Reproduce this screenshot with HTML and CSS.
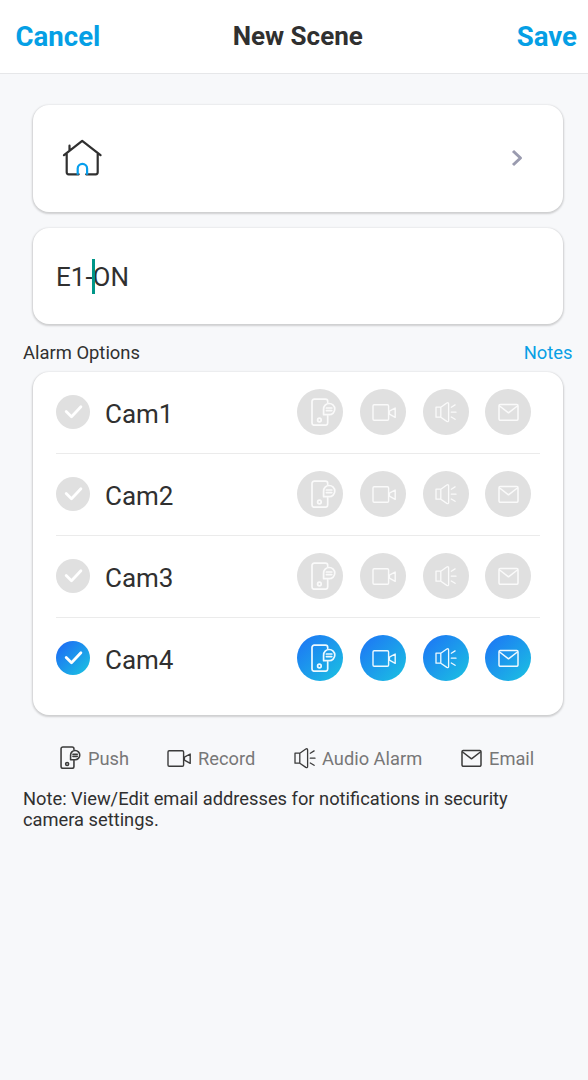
FILE: index.html
```html
<!DOCTYPE html>
<html lang="en">
<head>
<meta charset="utf-8">
<title>New Scene</title>
<link rel="stylesheet" href="styles.css">
</head>
<body>
<svg class="sprite" aria-hidden="true">
  <symbol id="push" viewBox="0 0 25 28">
    <path d="M16.7 4.2V3.4a2.2 2.2 0 0 0-2.2-2.2H3.2A2.2 2.2 0 0 0 1 3.4V25a2.2 2.2 0 0 0 2.2 2.2h11.3a2.2 2.2 0 0 0 2.2-2.2v-7.2"/>
    <circle cx="8.4" cy="22" r="1.8"/>
    <path d="M12.6 16.7V11.2a5.6 5.6 0 1 1 5.6 5.5zM15.4 10h5.4M15.4 12.6h5.4"/>
  </symbol>
  <symbol id="record" viewBox="0 0 25 19">
    <rect x="1" y="1.7" width="15.6" height="15.6" rx="1.2"/>
    <path d="M17.4 8.2l5.8-3.2v9.4l-5.8-3.2z"/>
  </symbol>
  <symbol id="audio" viewBox="0 0 22 22">
    <path d="M1 6.2h4.8v10H1zM5.8 6.2l6-4.2q1.8-.8 1.8 1v16.4q0 1.8-1.8 1l-6-4.2M16.3 6.2l3.8-2.3M16.3 11.2h4.7M16.3 16l3.8 2.3"/>
  </symbol>
  <symbol id="email" viewBox="0 0 21 18">
    <rect x="1" y="1.5" width="19" height="15.8" rx="1.2"/>
    <path d="M1.6 3l8.9 6.8L19.4 3"/>
  </symbol>
  <symbol id="check" viewBox="0 0 34 34">
    <path d="M10.2 16.5l5.3 5.3 9.4-10"/>
  </symbol>
</svg>

<header class="topbar">
  <a class="action">Cancel</a>
  <h1 class="title">New Scene</h1>
  <a class="action save">Save</a>
</header>

<main class="content">
  <section class="card icon-card">
    <svg class="house" viewBox="0 0 40 40">
      <path d="M2 17.2L20.2 2.8 38.5 17.2M7.5 12V7.7M4.700 16v18.300q0 2 2 2h10M24.200 36.300h9.500q2 0 2-2V16"/>
      <path class="door" d="M15.700 36.800v-6.300a4.700 4.700 0 0 1 9.400 0v6.300"/>
    </svg>
    <svg class="chevron" viewBox="0 0 12 18"><path d="M2 2l7.500 7L2 16"/></svg>
  </section>

  <section class="card name-card"><span>E1-</span><span class="caret"></span><span>ON</span></section>

  <div class="section-head"><span class="label">Alarm Options</span><a class="notes">Notes</a></div>

  <section class="card cams">
    <div class="row">
      <svg class="tick"><use href="#check"/></svg><span class="cam">Cam1</span>
      <div class="options">
        <span class="dot"><svg class="push"><use href="#push"/></svg></span>
        <span class="dot"><svg class="record"><use href="#record"/></svg></span>
        <span class="dot"><svg class="audio"><use href="#audio"/></svg></span>
        <span class="dot"><svg class="email"><use href="#email"/></svg></span>
      </div>
    </div>
    <div class="row">
      <svg class="tick"><use href="#check"/></svg><span class="cam">Cam2</span>
      <div class="options">
        <span class="dot"><svg class="push"><use href="#push"/></svg></span>
        <span class="dot"><svg class="record"><use href="#record"/></svg></span>
        <span class="dot"><svg class="audio"><use href="#audio"/></svg></span>
        <span class="dot"><svg class="email"><use href="#email"/></svg></span>
      </div>
    </div>
    <div class="row">
      <svg class="tick"><use href="#check"/></svg><span class="cam">Cam3</span>
      <div class="options">
        <span class="dot"><svg class="push"><use href="#push"/></svg></span>
        <span class="dot"><svg class="record"><use href="#record"/></svg></span>
        <span class="dot"><svg class="audio"><use href="#audio"/></svg></span>
        <span class="dot"><svg class="email"><use href="#email"/></svg></span>
      </div>
    </div>
    <div class="row active">
      <svg class="tick"><use href="#check"/></svg><span class="cam">Cam4</span>
      <div class="options">
        <span class="dot"><svg class="push"><use href="#push"/></svg></span>
        <span class="dot"><svg class="record"><use href="#record"/></svg></span>
        <span class="dot"><svg class="audio"><use href="#audio"/></svg></span>
        <span class="dot"><svg class="email"><use href="#email"/></svg></span>
      </div>
    </div>
  </section>

  <div class="legend">
    <div class="item item-push"><svg class="push"><use href="#push"/></svg><span>Push</span></div>
    <div class="item item-record"><svg class="record"><use href="#record"/></svg><span>Record</span></div>
    <div class="item item-audio"><svg class="audio"><use href="#audio"/></svg><span>Audio Alarm</span></div>
    <div class="item item-email"><svg class="email"><use href="#email"/></svg><span>Email</span></div>
  </div>

  <p class="note">Note: View/Edit email addresses for notifications in security camera settings.</p>
</main>
</body>
</html>
```
FILE: styles.css
```css
* { box-sizing: border-box; }
body {
  margin: 0;
  min-height: 1080px;
  background: #f7f8fa;
  color: #303030;
  font-family: Roboto, "Liberation Sans", sans-serif;
}
.sprite { display: none; }
svg {
  display: block;
  flex: none;
  fill: none;
  stroke: currentColor;
  stroke-linecap: round;
  stroke-linejoin: round;
}
.topbar {
  display: grid;
  grid-template-columns: 1fr auto 1fr;
  align-items: center;
  height: 74px;
  padding: 0 11px 1px 15.5px;
  background: #fff;
  border-bottom: 1px solid #e6e7e9;
}
.action { color: #059fe5; font-size: 27.6px; font-weight: 700; }
.save { text-align: right; }
.title { margin: 0 0 0 3px; font-size: 26px; font-weight: 700; }
.content { padding: 31px 25px 0 32.5px; }
.card {
  width: 530px;
  background: #fff;
  border-radius: 16px;
  box-shadow: 0 1px 2px 1px rgba(0, 0, 0, .17);
}
.icon-card {
  display: flex;
  align-items: center;
  justify-content: space-between;
  height: 107px;
  padding: 0 39.5px 1px 29px;
}
.house { width: 40px; height: 40px; stroke: #303030; stroke-width: 2.2; }
.door { stroke: #079fed; stroke-linecap: butt; }
.chevron { width: 12px; height: 18px; stroke: #9a9baf; stroke-width: 3; stroke-linecap: butt; }
.name-card {
  display: flex;
  align-items: center;
  height: 96px;
  margin-top: 16px;
  padding: 2px 23.5px 0;
  font-size: 26px;
}
.caret { width: 3px; height: 35px; margin: -2px -2px 0 -1px; background: #009688; z-index: 1; }
.section-head {
  display: flex;
  align-items: center;
  justify-content: space-between;
  height: 48px;
  margin: 0 -9.5px;
  padding-top: 9px;
  font-size: 18.4px;
}
.notes { color: #079fe5; }
.cams { height: 343px; padding: 0 22.5px 0 23px; }
.row {
  display: flex;
  align-items: center;
  height: 82px;
  padding-bottom: 1px;
  border-bottom: 1px solid #ebebeb;
}
.row.active { border-color: transparent; }
.tick {
  width: 34px;
  height: 34px;
  border-radius: 50%;
  background: #e0e0e0;
  color: #fff;
  stroke-width: 2.8;
}
.cam { margin-left: 15.5px; padding-top: 3px; font-size: 26px; }
.options { display: flex; gap: 16.7px; margin-left: auto; margin-right: 8.8px; }
.dot {
  display: grid;
  place-items: center;
  width: 46px;
  height: 46px;
  border-radius: 50%;
  background: #e0e0e0;
  color: #fafafa;
}
.active .tick { background: linear-gradient(135deg, #1d73f3 15%, #1bbde3 90%); }
.active .dot { background: linear-gradient(135deg, #1d7af4 10%, #1bbfe2 95%); color: #edf9ff; }
.push { width: 25px; height: 28px; stroke-width: 1.7; }
.record { width: 25px; height: 19px; stroke-width: 1.4; }
.audio { width: 22px; height: 22px; stroke-width: 1.3; }
.email { width: 21px; height: 18px; stroke-width: 1.5; }
.dot .push { margin-left: 7px; }
.dot .record { margin-left: 3px; }
.dot .audio { margin-left: 1px; }
.legend {
  display: flex;
  align-items: center;
  height: 28px;
  margin-top: 29px;
  color: #777;
  font-size: 18.3px;
}
.item { display: flex; align-items: center; white-space: nowrap; }
.item svg { color: #3b3b3b; }
.item .push { width: 21px; height: 23px; margin-top: -1px; stroke-width: 1.9; }
.item-push { width: 107px; margin-left: 27.5px; gap: 7px; }
.item-record { width: 127px; gap: 6px; }
.item-audio { width: 167px; gap: 6px; }
.item-email { gap: 7px; }
.note { margin: 16px 0 0 -9.5px; width: 520px; font-size: 18.3px; line-height: 21px; }
```
